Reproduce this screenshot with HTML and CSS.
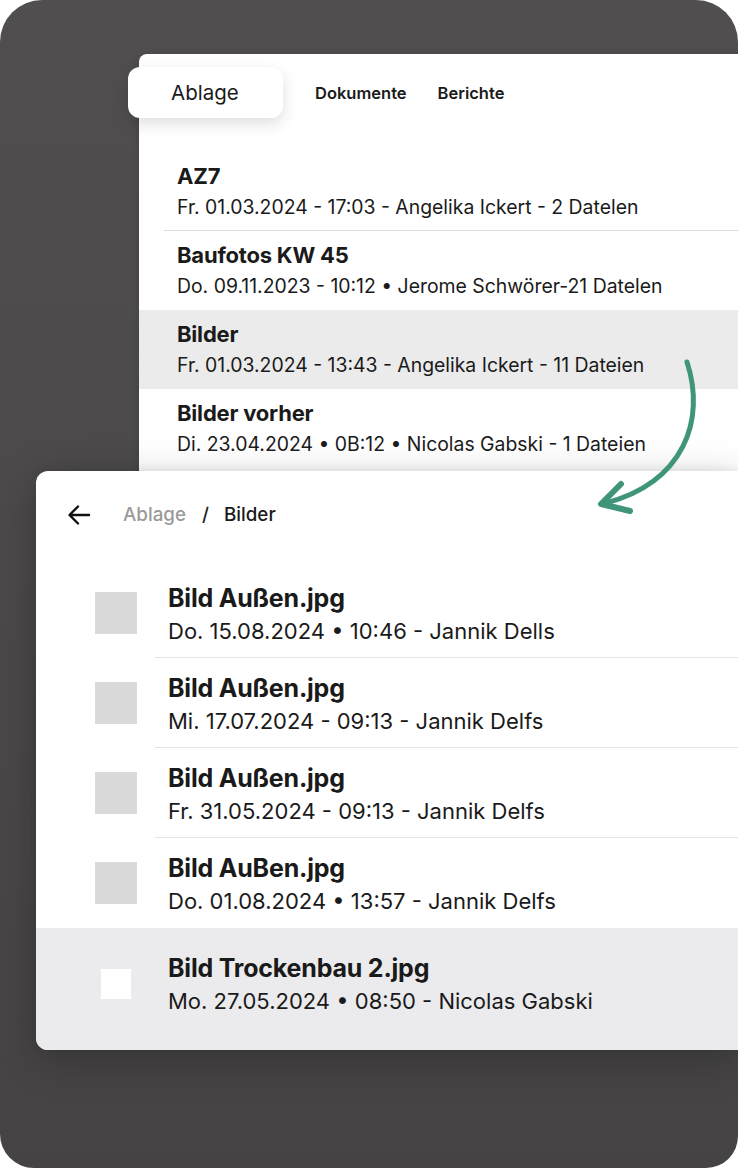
FILE: index.html
```html
<!DOCTYPE html>
<html lang="de">
<head>
    <meta charset="UTF-8">
    <meta name="viewport" content="width=device-width, initial-scale=1.0">
    <title>Ablage</title>
    <link rel="stylesheet" href="styles.css">
</head>
<body>
    <div class="frame">
        <div class="back-panel">
            <div class="tabs">
                <div class="tab tab-active">Ablage</div>
                <div class="tab">Dokumente</div>
                <div class="tab">Berichte</div>
            </div>
            <div class="folder">
                <div class="folder-body">
                    <div class="folder-title">AZ7</div>
                    <div class="folder-meta">Fr. 01.03.2024 - 17:03 - Angelika Ickert - 2 Datelen</div>
                </div>
            </div>
            <div class="folder">
                <div class="folder-body">
                    <div class="folder-title">Baufotos KW 45</div>
                    <div class="folder-meta">Do. 09.11.2023 - 10:12 • Jerome Schwörer-21 Datelen</div>
                </div>
            </div>
            <div class="folder folder-selected">
                <div class="folder-body">
                    <div class="folder-title">Bilder</div>
                    <div class="folder-meta">Fr. 01.03.2024 - 13:43 - Angelika Ickert - 11 Dateien</div>
                </div>
            </div>
            <div class="folder folder-last">
                <div class="folder-body">
                    <div class="folder-title">Bilder vorher</div>
                    <div class="folder-meta">Di. 23.04.2024 • 0B:12 • Nicolas Gabski - 1 Dateien</div>
                </div>
            </div>
        </div>

        <div class="front-panel">
            <div class="crumbs">
                <svg class="back-icon" width="26" height="26" viewBox="0 0 26 26">
                    <path d="M23 13H4M12 4.5L3.5 13L12 21.5" fill="none" stroke="#111" stroke-width="2.4" stroke-linecap="round" stroke-linejoin="round"/>
                </svg>
                <span class="crumb-parent">Ablage</span>
                <span class="crumb-sep">/</span>
                <span class="crumb-current">Bilder</span>
            </div>
            <div class="file">
                <div class="thumb"></div>
                <div class="file-body">
                    <div class="file-name">Bild Außen.jpg</div>
                    <div class="file-meta">Do. 15.08.2024 • 10:46 - Jannik Dells</div>
                </div>
            </div>
            <div class="file">
                <div class="thumb"></div>
                <div class="file-body">
                    <div class="file-name">Bild Außen.jpg</div>
                    <div class="file-meta">Mi. 17.07.2024 - 09:13 - Jannik Delfs</div>
                </div>
            </div>
            <div class="file">
                <div class="thumb"></div>
                <div class="file-body">
                    <div class="file-name">Bild Außen.jpg</div>
                    <div class="file-meta">Fr. 31.05.2024 - 09:13 - Jannik Delfs</div>
                </div>
            </div>
            <div class="file file-plain">
                <div class="thumb"></div>
                <div class="file-body">
                    <div class="file-name">Bild AuBen.jpg</div>
                    <div class="file-meta">Do. 01.08.2024 • 13:57 - Jannik Delfs</div>
                </div>
            </div>
            <div class="file file-selected">
                <div class="thumb thumb-small"></div>
                <div class="file-body">
                    <div class="file-name">Bild Trockenbau 2.jpg</div>
                    <div class="file-meta">Mo. 27.05.2024 • 08:50 - Nicolas Gabski</div>
                </div>
            </div>
        </div>

        <!-- curved arrow from the folder to the opened view -->
        <svg class="link-arrow" width="738" height="1168" viewBox="0 0 738 1168">
            <path d="M687 362 C 706 420, 684 482, 606 503" fill="none" stroke="#3f957a" stroke-width="5" stroke-linecap="round"/>
            <path d="M621 484 L 601 504 L 630 511" fill="none" stroke="#3f957a" stroke-width="6" stroke-linecap="round" stroke-linejoin="round"/>
        </svg>
    </div>
</body>
</html>
```

FILE: styles.css
```css
body {
    margin: 0;
    background: #ffffff;
    font-family: 'Inter', 'Noto Sans', sans-serif;
    color: #1a1a1a;
}

.frame {
    position: relative;
    width: 738px;
    height: 1168px;
    box-sizing: border-box;
    padding-top: 54px;
    border-radius: 42px 42px 32px 34px;
    background: linear-gradient(180deg, #504e4f 0%, #4a4849 60%, #454344 100%);
    overflow: hidden;
}

/* back window: folder list */
.back-panel {
    margin-left: 139px;
    height: 417px;
    background: #ffffff;
    border-top-left-radius: 8px;
    box-shadow: 0 2px 10px rgba(0, 0, 0, 0.15);
}

.tabs {
    display: flex;
    align-items: center;
    padding-top: 13px;
    margin-left: -11px;
    margin-bottom: 34px;
}

.tab {
    font-size: 16.5px;
    font-weight: 600;
    margin-right: 31px;
}

.tab-active {
    width: 155px;
    height: 51px;
    box-sizing: border-box;
    padding-left: 43px;
    margin-right: 32px;
    display: flex;
    align-items: center;
    font-size: 20.5px;
    font-weight: 400;
    background: #ffffff;
    border-radius: 12px;
    box-shadow: 0 6px 16px rgba(0, 0, 0, 0.13);
}

.folder {
    padding-left: 25px;
}

.folder-body {
    height: 79px;
    box-sizing: border-box;
    padding: 11px 0 0 13px;
    border-bottom: 1px solid #dcdcdc;
}

.folder-selected {
    background: #ebebeb;
}

.folder-selected .folder-body,
.folder-last .folder-body,
.folder:nth-child(3) .folder-body {
    border-bottom-color: transparent;
}

.folder-title {
    font-size: 22px;
    font-weight: 700;
    line-height: 26px;
    letter-spacing: -0.2px;
}

.folder-meta {
    margin-top: 6px;
    font-size: 19.4px;
    line-height: 24px;
}

/* front window: opened folder */
.front-panel {
    margin-left: 36px;
    height: 579px;
    background: #ffffff;
    border-radius: 12px 0 0 12px;
    overflow: hidden;
    box-shadow: 0 10px 40px rgba(0, 0, 0, 0.25), 0 -2px 8px rgba(0, 0, 0, 0.06);
}

.crumbs {
    display: flex;
    align-items: center;
    height: 97px;
    box-sizing: border-box;
    padding: 0 0 10px 30px;
    font-size: 18.8px;
    font-weight: 500;
}

.back-icon {
    margin-right: 31px;
}

.crumb-parent {
    color: #9a9a9a;
}

.crumb-sep {
    margin: 0 15px 0 16px;
}

.file {
    display: flex;
    align-items: center;
    padding-left: 59px;
}

.thumb {
    flex: none;
    width: 42px;
    height: 42px;
    margin-right: 18px;
    background: #dadada;
}

.thumb-small {
    width: 30px;
    height: 30px;
    margin: 0 24px 10px 6px;
    background: #ffffff;
}

.file-body {
    flex: 1;
    height: 90px;
    box-sizing: border-box;
    padding: 15px 0 0 13px;
    border-bottom: 1px solid #e3e3e3;
}

.file-plain .file-body {
    border-bottom: none;
}

.file-selected {
    background: #ebebed;
    height: 122px;
}

.file-selected .file-body {
    border-bottom: none;
    height: auto;
    padding-top: 0;
    padding-bottom: 11px;
}

.file-name {
    font-size: 25px;
    font-weight: 700;
    line-height: 30px;
    letter-spacing: -0.2px;
}

.file-meta {
    margin-top: 5px;
    font-size: 22px;
    line-height: 26px;
}

.link-arrow {
    position: absolute;
    left: 0;
    top: 0;
    pointer-events: none;
}
```
